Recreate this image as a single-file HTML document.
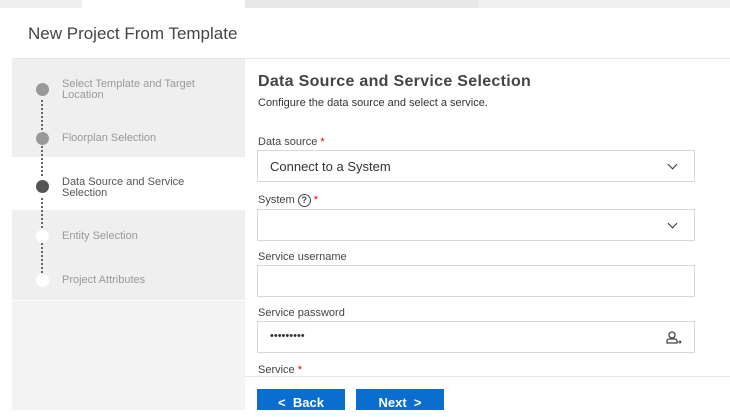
<!DOCTYPE html><html><head><style>
body{margin:0;width:730px;height:410px;overflow:hidden;background:#fff;font-family:"Liberation Sans",sans-serif;position:relative}
.a{position:absolute}
.lbl{font-size:11px;color:#444}
.inp{position:absolute;left:257px;width:438px;height:32px;border:1px solid #d8d8d8;background:#fff;box-sizing:border-box}
.step{position:absolute;left:62px;font-size:11px;color:#999;line-height:11px}
.dot{position:absolute;left:36px;width:13px;height:13px;border-radius:50%}
.vl{position:absolute;left:41px;width:0;border-left:2px dotted #666}
.chev{position:absolute;right:18px;top:10px;width:6px;height:6px;border-right:1.5px solid #333;border-bottom:1.5px solid #333;transform:rotate(45deg)}
.btn{position:absolute;top:389px;height:21px;background:#0a6ed1;color:#fff;font-weight:bold;font-size:13px;text-align:center;line-height:28px}
.star{color:#e00}
</style></head><body>
<div class="a" style="left:0;top:0;width:82px;height:8px;background:#eee"></div>
<div class="a" style="left:245px;top:0;width:233px;height:8px;background:#e8e8e8"></div>
<div class="a" style="left:478px;top:0;width:252px;height:8px;background:#f0f0f0"></div>
<div class="a" style="left:28px;top:24px;font-size:17px;color:#444">New Project From Template</div>
<div class="a" style="left:12px;top:58px;width:718px;height:1px;background:#e6e6e6"></div>
<div class="a" style="left:12px;top:59px;width:233px;height:98px;background:#efefef"></div>
<div class="a" style="left:12px;top:210px;width:233px;height:90px;background:#efefef"></div>
<div class="a" style="left:12px;top:301px;width:233px;height:109px;background:#f3f3f3"></div>
<div class="vl" style="top:100px;height:30px"></div>
<div class="vl" style="top:146px;height:30px"></div>
<div class="vl" style="top:198px;height:30px"></div>
<div class="vl" style="top:243px;height:30px"></div>
<div class="dot" style="top:83px;background:#999"></div>
<div class="dot" style="top:132px;background:#999"></div>
<div class="dot" style="top:180px;background:#555"></div>
<div class="dot" style="top:230px;background:#fff"></div>
<div class="dot" style="top:274px;background:#fff"></div>
<div class="step" style="top:79px">Select Template and Target<br>Location</div>
<div class="step" style="top:133px">Floorplan Selection</div>
<div class="step" style="top:177px;color:#555">Data Source and Service<br>Selection</div>
<div class="step" style="top:231px">Entity Selection</div>
<div class="step" style="top:275px">Project Attributes</div>
<div class="a" style="left:258px;top:73px;font-size:16px;color:#444;font-weight:bold;letter-spacing:0.3px">Data Source and Service Selection</div>
<div class="a" style="left:258px;top:97px;font-size:11px;color:#333">Configure the data source and select a service.</div>
<div class="a lbl" style="left:258px;top:136px">Data source <span class="star">*</span></div>
<div class="inp" style="top:150px"><span class="a" style="left:12px;top:8px;font-size:13px;color:#333">Connect to a System</span><div class="chev"></div></div>
<div class="a lbl" style="left:258px;top:194px">System <span style="display:inline-block;width:11px;height:11px;border:1.3px solid #444;border-radius:50%;font-size:9px;text-align:center;line-height:11px;font-weight:bold">?</span> <span class="star">*</span></div>
<div class="inp" style="top:209px"><div class="chev"></div></div>
<div class="a lbl" style="left:258px;top:251px">Service username</div>
<div class="inp" style="top:265px"></div>
<div class="a lbl" style="left:258px;top:307px">Service password</div>
<div class="inp" style="top:321px"><span class="a" style="left:12px;top:8px;font-size:11px;color:#333;letter-spacing:0">•••••••••</span>
<svg class="a" style="right:12px;top:9px" width="16" height="14" viewBox="0 0 16 14"><circle cx="6" cy="4" r="3" fill="none" stroke="#444" stroke-width="1.3"/><path d="M1 12v-2a2 2 0 0 1 2-2h6a2 2 0 0 1 2 2v2z" fill="none" stroke="#444" stroke-width="1.3"/><path d="M11 11h4M13.5 9.5l1.5 1.5-1.5 1.5" stroke="#444" fill="none" stroke-width="1"/></svg></div>
<div class="a lbl" style="left:258px;top:364px">Service <span class="star">*</span></div>
<div class="a" style="left:245px;top:376px;width:485px;height:1px;background:#e6e6e6"></div>
<div class="btn" style="left:257px;width:88px">&lt;&nbsp;&nbsp;Back</div>
<div class="btn" style="left:356px;width:88px">Next&nbsp;&nbsp;&gt;</div>
</body></html>
